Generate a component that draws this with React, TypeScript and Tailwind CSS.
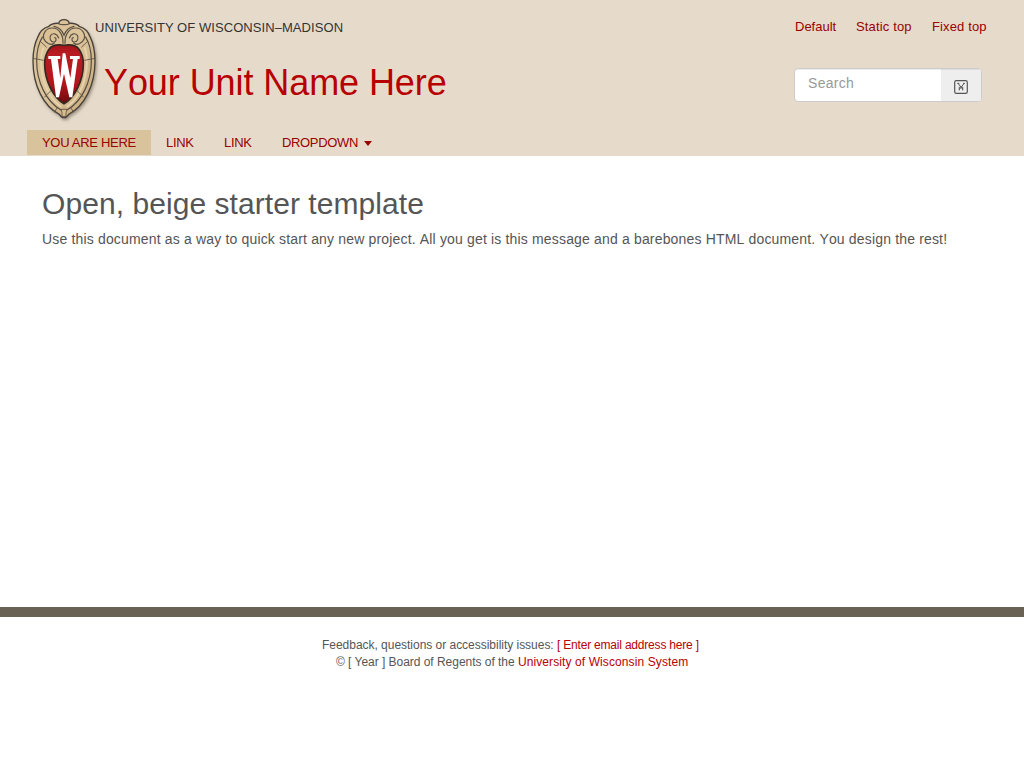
import React from "react";

function Crest() {
  return (
    <svg viewBox="0 0 252 360" className="h-[120px] w-[84px] shrink-0" aria-hidden="true">
      <defs>
        <linearGradient id="crestRed" x1="0" x2="0" y1="0" y2="1">
          <stop offset="0" stopColor="#a5141a" />
          <stop offset="0.15" stopColor="#b91d23" />
          <stop offset="0.65" stopColor="#b3161b" />
          <stop offset="1" stopColor="#6d0a0e" />
        </linearGradient>
        <linearGradient id="crestStone" x1="0" x2="1" y1="0" y2="1">
          <stop offset="0" stopColor="#d9bf92" />
          <stop offset="0.45" stopColor="#dcc49c" />
          <stop offset="1" stopColor="#c6a878" />
        </linearGradient>
        <filter id="crestShadow" x="-20%" y="-20%" width="140%" height="140%">
          <feDropShadow dx="4" dy="6" stdDeviation="4" floodColor="#5a4d3c" floodOpacity="0.5" />
        </filter>
      </defs>
      <path
        filter="url(#crestShadow)"
        d="M104 40c2-7 8-11 16-11s14 4 16 11c12-1 23 2 31 10c14 4 25 14 31 30c10 20 15 45 15 73c0 74-32 136-79 160c-4 7-8 10-14 10s-10-3-14-10c-47-24-79-86-79-160c0-28 5-53 15-73c6-16 17-26 31-30c8-8 19-11 31-10z"
        fill="url(#crestStone)"
        stroke="#48423b"
        strokeWidth="4"
      />
      <path
        d="M56 80C43 100 38 125 38 153c0 64 29 122 73 147h18c44-25 73-83 73-147c0-28-5-53-18-73"
        fill="none"
        stroke="#554c42"
        strokeWidth="3.5"
      />
      <path
        d="M58 112c-9 28-8 59-2 86c9 42 31 78 56 92M182 112c9 28 8 59 2 86c-9 42-31 78-56 92"
        fill="none"
        stroke="#e6d2ad"
        strokeWidth="6"
      />
      <g fill="none" stroke="#5b5145" strokeWidth="2.5">
        <path d="M27 145l32 6M213 145l-32 6M61 262l24-24M179 262l-24-24M48 93l20 19M192 93l-20 19M91 307l8-13M149 307l-8-13" />
        <path d="M111 298h18l-3 10v11h-12v-11z" fill="#d8bd8e" />
      </g>
      <g fill="none" stroke="#5b5145" strokeWidth="3.5" strokeLinecap="round">
        <path d="M117 100c1-24-11-46-32-46c-19 0-31 17-25 34c5 12 22 20 31 11" />
        <path d="M104 84c-5-14-18-16-24-8c-5 8 0 20 9 20c8 0 10-11 3-13" />
        <path d="M123 100c-1-24 11-46 32-46c19 0 31 17 25 34c-5 12-22 20-31 11" />
        <path d="M136 84c5-14 18-16 24-8c5 8 0 20-9 20c-8 0-10-11-3-13" />
        <path d="M90 49c15 3 25 13 30 27c5-14 15-24 30-27M104 41c6 4 26 4 32 0" />
      </g>
      <path
        d="M120 106c-19-3-37 0-46 13c-8 12-12 25-12 42c0 50 25 101 58 120c33-19 58-70 58-120c0-17-4-30-12-42c-9-13-27-16-46-13z"
        fill="url(#crestRed)"
        stroke="#362821"
        strokeWidth="5"
      />
      <path
        d="M73 138h36v9h-8l8 58l7-75h8l15 75l8-58h-9v-9h29v9h-6l-16 115h-9l-16-71l-15 71h-9L81 147h-8z"
        fill="#fff"
      />
    </svg>
  );
}

function SearchGlyph() {
  return (
    <svg viewBox="0 0 14 14" className="mt-1 h-3.5 w-3.5" fill="none" stroke="#555" aria-hidden="true">
      <rect x="0.7" y="0.7" width="12.6" height="12.6" rx="1.6" strokeWidth="1.2" />
      <path d="M3.3 3.4h2M9 3.4h1.8M4.3 3.6l4.4 5.8M10 3.6L5.3 9.4M5.3 10.4V6.8M8.7 10.4V6.8" strokeWidth="1" />
    </svg>
  );
}

export default function App() {
  return (
    <div className="flex h-[768px] w-full flex-col overflow-hidden bg-white font-['Liberation_Sans',Arial,sans-serif] text-[14px] text-[#555]">
      <header className="flex h-[156px] shrink-0 flex-col bg-[#e6dbcb]">
        <div className="flex h-[130px] pl-6 pt-2.5">
          <Crest />
          <div className="-ml-[13px] flex flex-col whitespace-nowrap">
            <span className="mt-2 text-[13px] leading-[20px] tracking-[0.065px] text-[#333]">UNIVERSITY OF WISCONSIN–MADISON</span>
            <h1 className="ml-[9px] mt-[25px] text-[36px] leading-[40px] tracking-[-0.08px] text-[#b70101] [font-kerning:none]">Your Unit Name Here</h1>
          </div>
          <div className="ml-auto flex w-[229px] flex-col">
            <nav className="mt-[7px] flex gap-5 whitespace-nowrap text-[13px] leading-5 text-[#990000]">
              <a href="#" className="w-[41px]">Default</a>
              <a href="#" className="w-14 tracking-[0.15px]">Static top</a>
              <a href="#" className="tracking-[0.14px]">Fixed top</a>
            </nav>
            <div className="-ml-px mt-[31px] flex h-[34px] w-[188px] overflow-hidden rounded-[4px] border border-[#ccc] bg-white">
              <div className="flex-1 pl-[13px] pt-1 leading-5 tracking-[0.3px] text-[#999] shadow-[inset_0_1px_1px_rgba(0,0,0,0.075)]">Search</div>
              <button className="flex w-10 items-center justify-center bg-[#eee] shadow-[inset_0_1px_1px_rgba(0,0,0,0.075)]"><SearchGlyph /></button>
            </div>
          </div>
        </div>
        <nav className="ml-[27px] flex h-[25px] whitespace-nowrap text-[13px] leading-[26px] text-[#990000]">
          <a href="#" className="w-[124px] bg-[#d9c39d] pl-[15px] tracking-[-0.3px]">YOU ARE HERE</a>
          <a href="#" className="w-[58px] pl-[15px] tracking-[-0.3px]">LINK</a>
          <a href="#" className="w-[58px] pl-[15px] tracking-[-0.3px]">LINK</a>
          <a href="#" className="flex items-center pl-[15px]">
            <span className="w-[82px] tracking-[-0.34px]">DROPDOWN</span>
            <span className="mt-px h-0 w-0 border-x-4 border-t-[5px] border-x-transparent border-t-[#990000]" />
          </a>
        </nav>
      </header>
      <main className="h-[451px] shrink-0 whitespace-nowrap pl-[42px] pt-[31px]">
        <h2 className="text-[30px] leading-[33px] tracking-[0.06px]">Open, beige starter template</h2>
        <p className="mt-[9px] leading-5 tracking-[0.165px] [font-kerning:none]">
          Use this document as a way to quick start any new project. All you get is this message and a barebones HTML document. You design the rest!
        </p>
      </main>
      <footer className="flex flex-col whitespace-nowrap border-t-[10px] border-[#696153] pt-5 text-[12px] leading-[17px]">
        <p className="ml-[322px] tracking-[-0.025px]">Feedback, questions or accessibility issues: <a href="#" className="tracking-[-0.2px] text-[#b70101]">[ Enter email address here ]</a></p>
        <p className="ml-[336px] tracking-[-0.03px]">© [ Year ] Board of Regents of the <a href="#" className="tracking-[0.1px] text-[#b70101]">University of Wisconsin System</a></p>
      </footer>
    </div>
  );
}
